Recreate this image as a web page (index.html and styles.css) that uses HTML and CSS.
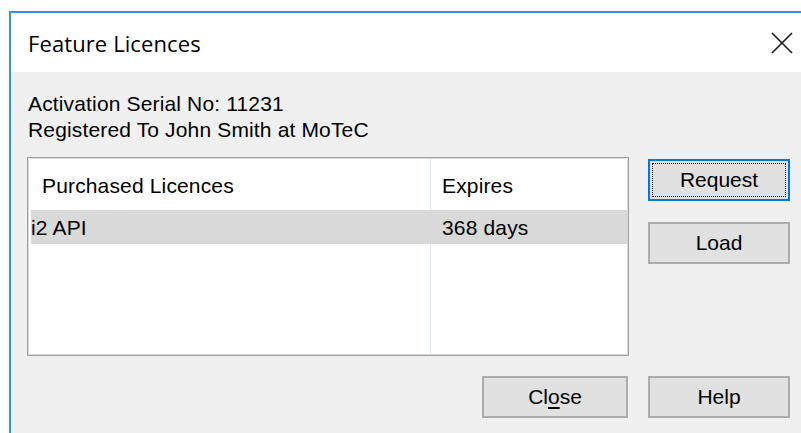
FILE: index.html
```html
<!DOCTYPE html>
<html lang="en">
<head>
<meta charset="utf-8">
<title>Feature Licences</title>
<link rel="stylesheet" href="styles.css">
</head>
<body>
<div class="window">
  <header class="titlebar">
    <span class="title">Feature Licences</span>
    <button class="close-x" aria-label="Close">
      <svg width="22" height="22" viewBox="0 0 22 22">
        <path d="M1 1 L21 21 M21 1 L1 21" stroke="#1a1a1a" stroke-width="1.6" fill="none"/>
      </svg>
    </button>
  </header>
  <main class="dialog">
    <div class="info">
      <div>Activation Serial No: 11231</div>
      <div>Registered To John Smith at MoTeC</div>
    </div>
    <div class="content">
      <div class="listview">
        <div class="row head">
          <div class="cell name">Purchased Licences</div>
          <div class="cell expires">Expires</div>
        </div>
        <div class="row selected">
          <div class="cell name">i2 API</div>
          <div class="cell expires">368 days</div>
        </div>
      </div>
      <div class="side">
        <button class="btn focused"><span class="focus">Request</span></button>
        <button class="btn">Load</button>
      </div>
    </div>
    <div class="footer">
      <button class="btn wide">Cl<u>o</u>se</button>
      <button class="btn">Help</button>
    </div>
  </main>
</div>
</body>
</html>
```
FILE: styles.css
```css
html, body {
  margin: 0;
  padding: 0;
  background: #ffffff;
  overflow: hidden;
}

body {
  width: 801px;
  height: 433px;
  font-family: "Liberation Sans", Arial, sans-serif;
  font-size: 21px;
  letter-spacing: 0.15px;
  color: #000;
}

.window {
  margin: 11px 0 0 9px;
  border-left: 2px solid #3a8fdd;
  border-top: 2px solid #3a8fdd;
  height: 430px;
  background: #f0f0f0;
}

.titlebar {
  height: 59px;
  background: #ffffff;
  display: flex;
  align-items: center;
  justify-content: space-between;
  padding: 0 0 0 17px;
  box-sizing: border-box;
}

.title {
  font-family: "Open Sans", "Noto Sans", sans-serif;
  font-size: 22px;
  letter-spacing: 0.1px;
  line-height: 28px;
  color: #000;
}

.close-x {
  border: 0;
  background: transparent;
  padding: 0;
  margin: 0 8px 0 0;
  width: 22px;
  height: 22px;
  display: flex;
}

.dialog {
  padding: 19px 0 0 16px;
}

.info {
  line-height: 26px;
  padding-left: 1px;
}

.content {
  display: flex;
  gap: 19px;
  margin-top: 14px;
}

.listview {
  width: 602px;
  height: 199px;
  box-sizing: border-box;
  border: 1px solid #a0a0a0;
  box-shadow: inset 0 0 0 1px #dadada;
  padding: 2px 1px 0 3px;
  background:
    linear-gradient(to right, transparent 402px, #e2ebf7 402px, #e2ebf7 403px, transparent 403px),
    #ffffff;
}

.row {
  display: grid;
  grid-template-columns: 400px 1fr;
  line-height: 24px;
}

.row.head {
  padding: 14px 0 12px;
}

.row.selected {
  padding: 6px 0 4px;
  background: #d9d9d9;
}

.cell.expires {
  padding-left: 11px;
}

.row.head .cell.name {
  padding-left: 11px;
}

.side {
  display: flex;
  flex-direction: column;
  gap: 21px;
  padding-top: 2px;
}

.btn {
  width: 142px;
  height: 42px;
  box-sizing: border-box;
  background: #e1e1e1;
  border: 2px solid #adadad;
  font-family: "Liberation Sans", Arial, sans-serif;
  font-size: 21px;
  color: #000;
  padding: 0;
  display: flex;
  align-items: center;
  justify-content: center;
}

.btn.focused {
  border-color: #0078d7;
  padding: 2px;
}

.btn .focus {
  flex: 1;
  align-self: stretch;
  display: flex;
  align-items: center;
  justify-content: center;
  border: 1px dotted #000;
}

.btn u {
  text-underline-offset: 3px;
}

.footer {
  display: flex;
  gap: 20px;
  margin-top: 20px;
  padding-left: 455px;
}

.btn.wide {
  width: 146px;
}
```
